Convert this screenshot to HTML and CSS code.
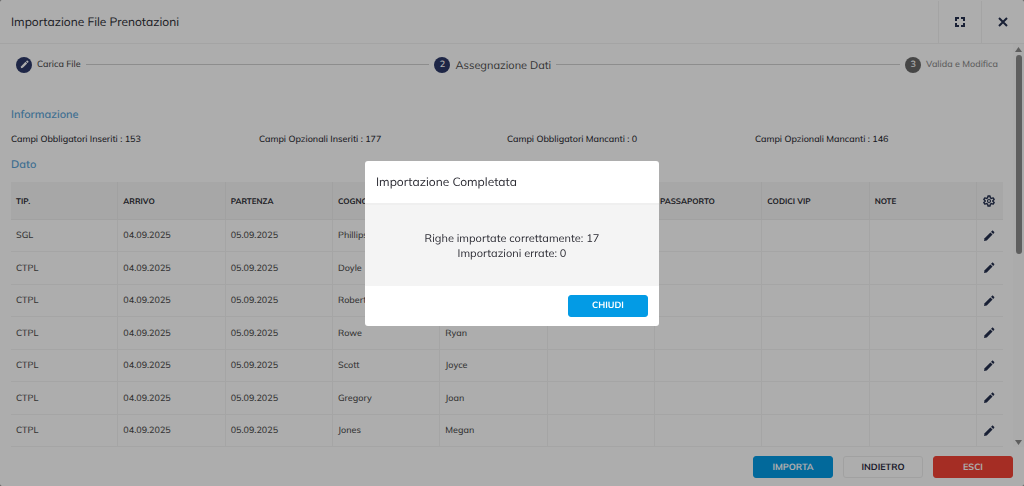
FILE: index.html
```html
<!DOCTYPE html>
<html lang="it">
<head>
    <meta charset="UTF-8">
    <meta name="viewport" content="width=device-width, initial-scale=1.0">
    <title>Importazione File Prenotazioni</title>
    <link rel="stylesheet" href="styles.css">
</head>
<body>
    <!-- Icone condivise -->
    <svg class="sprite" aria-hidden="true">
        <symbol id="icon-pencil" viewBox="0 0 24 24">
            <path d="M2 22l1.200-5.500L14.800 4.900l4.300 4.300L7.500 20.800z"/>
            <path d="M16 3.700l1.900-1.900c.8-.8 1.800-.8 2.600 0l1.700 1.700c.8.8.8 1.800 0 2.600L20.300 8z"/>
        </symbol>
        <symbol id="icon-gear" viewBox="0 0 24 24">
            <path fill="none" stroke="currentColor" stroke-width="2.800" stroke-linejoin="round" d="M10 2h4l.7 3.600 2.200 1.300 3.500-1.200 2 3.400-2.800 2.400v1l2.800 2.400-2 3.400-3.500-1.200-2.200 1.300L14 22h-4l-.7-3.600-2.200-1.300-3.500 1.200-2-3.400 2.800-2.400v-1L1.600 9.100l2-3.400 3.500 1.200 2.200-1.300z"/>
            <circle cx="12" cy="12" r="3" fill="none" stroke="currentColor" stroke-width="2.400"/>
        </symbol>
    </svg>

    <div class="window">
        <header class="window-header">
            <h1>Importazione File Prenotazioni</h1>
            <button class="icon-button" type="button" aria-label="Schermo intero">
                <svg width="10" height="10" viewBox="0 0 10 10"><path fill="none" stroke="currentColor" stroke-width="2" d="M1 4V1h3M6 1h3v3M9 6v3H6M4 9H1V6"/></svg>
            </button>
            <button class="icon-button" type="button" aria-label="Chiudi finestra">
                <svg width="10" height="10" viewBox="0 0 10 10"><path fill="none" stroke="currentColor" stroke-width="2" d="M1 1l8 8M9 1L1 9"/></svg>
            </button>
        </header>

        <div class="window-body">
            <main class="content">
                <ol class="stepper">
                    <li class="step">
                        <span class="step-icon"><svg width="9" height="9"><use href="#icon-pencil"/></svg></span>
                        <span>Carica File</span>
                    </li>
                    <li class="step-line" aria-hidden="true"></li>
                    <li class="step active">
                        <span class="step-icon">2</span>
                        <span>Assegnazione Dati</span>
                    </li>
                    <li class="step-line" aria-hidden="true"></li>
                    <li class="step disabled">
                        <span class="step-icon">3</span>
                        <span>Valida e Modifica</span>
                    </li>
                </ol>

                <h2>Informazione</h2>
                <div class="info">
                    <span>Campi Obbligatori Inseriti : 153</span>
                    <span>Campi Opzionali Inseriti : 177</span>
                    <span>Campi Obbligatori Mancanti : 0</span>
                    <span>Campi Opzionali Mancanti : 146</span>
                </div>

                <h2>Dato</h2>
                <table>
                    <thead>
                        <tr>
                            <th>TIP.</th>
                            <th>ARRIVO</th>
                            <th>PARTENZA</th>
                            <th>COGNOME</th>
                            <th>NOME</th>
                            <th></th>
                            <th>PASSAPORTO</th>
                            <th>CODICI VIP</th>
                            <th>NOTE</th>
                            <th class="actions"><button type="button" aria-label="Impostazioni"><svg width="12" height="12"><use href="#icon-gear"/></svg></button></th>
                        </tr>
                    </thead>
                    <tbody>
                        <tr><td>SGL</td><td>04.09.2025</td><td>05.09.2025</td><td>Phillips</td><td></td><td></td><td></td><td></td><td></td><td class="actions"><button type="button" aria-label="Modifica"><svg width="12" height="12"><use href="#icon-pencil"/></svg></button></td></tr>
                        <tr><td>CTPL</td><td>04.09.2025</td><td>05.09.2025</td><td>Doyle</td><td></td><td></td><td></td><td></td><td></td><td class="actions"><button type="button" aria-label="Modifica"><svg width="12" height="12"><use href="#icon-pencil"/></svg></button></td></tr>
                        <tr><td>CTPL</td><td>04.09.2025</td><td>05.09.2025</td><td>Roberts</td><td></td><td></td><td></td><td></td><td></td><td class="actions"><button type="button" aria-label="Modifica"><svg width="12" height="12"><use href="#icon-pencil"/></svg></button></td></tr>
                        <tr><td>CTPL</td><td>04.09.2025</td><td>05.09.2025</td><td>Rowe</td><td>Ryan</td><td></td><td></td><td></td><td></td><td class="actions"><button type="button" aria-label="Modifica"><svg width="12" height="12"><use href="#icon-pencil"/></svg></button></td></tr>
                        <tr><td>CTPL</td><td>04.09.2025</td><td>05.09.2025</td><td>Scott</td><td>Joyce</td><td></td><td></td><td></td><td></td><td class="actions"><button type="button" aria-label="Modifica"><svg width="12" height="12"><use href="#icon-pencil"/></svg></button></td></tr>
                        <tr><td>CTPL</td><td>04.09.2025</td><td>05.09.2025</td><td>Gregory</td><td>Joan</td><td></td><td></td><td></td><td></td><td class="actions"><button type="button" aria-label="Modifica"><svg width="12" height="12"><use href="#icon-pencil"/></svg></button></td></tr>
                        <tr><td>CTPL</td><td>04.09.2025</td><td>05.09.2025</td><td>Jones</td><td>Megan</td><td></td><td></td><td></td><td></td><td class="actions"><button type="button" aria-label="Modifica"><svg width="12" height="12"><use href="#icon-pencil"/></svg></button></td></tr>
                    </tbody>
                </table>
            </main>
            <div class="scrollbar" aria-hidden="true">
                <svg width="7" height="5" viewBox="0 0 7 5"><path d="M3.500 0L7 5H0z"/></svg>
                <div class="track"><div class="thumb"></div></div>
                <svg width="7" height="5" viewBox="0 0 7 5"><path d="M3.500 5L7 0H0z"/></svg>
            </div>
        </div>

        <footer class="window-footer">
            <button class="button primary" type="button">IMPORTA</button>
            <button class="button" type="button">INDIETRO</button>
            <button class="button danger" type="button">ESCI</button>
        </footer>
    </div>

    <div class="overlay">
        <div class="dialog" role="dialog" aria-modal="true" aria-labelledby="dialog-title">
            <h2 id="dialog-title">Importazione Completata</h2>
            <div class="dialog-body">
                <p>Righe importate correttamente: 17</p>
                <p>Importazioni errate: 0</p>
            </div>
            <div class="dialog-footer">
                <button class="button primary" type="button">CHIUDI</button>
            </div>
        </div>
    </div>
</body>
</html>
```
FILE: styles.css
```css
* {
    box-sizing: border-box;
}
body {
    margin: 0;
    background: #777;
    color: #2b2b33;
    font-family: Mulish, "Open Sans", sans-serif;
    font-size: 9px;
    font-weight: 500;
    text-rendering: geometricPrecision;
}
h1, h2, p, ol {
    margin: 0;
    padding: 0;
}
button {
    font-family: inherit;
    text-rendering: inherit;
    cursor: pointer;
}
svg {
    display: block;
    fill: currentColor;
}
.sprite {
    position: absolute;
    width: 0;
    height: 0;
}

/* Finestra */
.window {
    display: flex;
    flex-direction: column;
    height: 100vh;
    background: #fff;
    border-top: 1px solid #fff;
    border-radius: 2px;
    overflow: hidden;
}
.window-header {
    display: flex;
    flex: none;
    height: 43px;
    border-bottom: 1px solid #f2f2f2;
}
.window-header h1 {
    flex: 1;
    padding-left: 11px;
    font-size: 12px;
    font-weight: 400;
    line-height: 42px;
}
.icon-button {
    display: flex;
    align-items: center;
    justify-content: center;
    width: 43px;
    padding: 0;
    border: 0;
    border-left: 1px solid #f2f2f2;
    background: none;
    color: #25304f;
}
.window-body {
    display: flex;
    flex: 1;
    min-height: 0;
}
.content {
    flex: 1;
    padding: 0 10px 0 11px;
    overflow: hidden;
}

/* Passaggi */
.stepper {
    display: flex;
    align-items: center;
    gap: 5px;
    height: 41px;
    padding: 0 5px;
    list-style: none;
}
.step {
    display: flex;
    align-items: center;
    gap: 5px;
    color: #4c4c4c;
}
.step.active {
    font-size: 11px;
    font-weight: 400;
}
.step.disabled {
    color: #8a8a8a;
}
.step-icon {
    display: flex;
    align-items: center;
    justify-content: center;
    width: 16px;
    height: 16px;
    border-radius: 50%;
    background: #2d3968;
    color: #fff;
    font-size: 9px;
    font-weight: 600;
}
.step.disabled .step-icon {
    background: #686868;
}
.step-line {
    flex: 1;
    height: 1px;
    background: #d0d0d0;
}

/* Contenuto */
.content h2 {
    color: #5ba3d6;
    font-size: 11px;
    font-weight: 600;
    line-height: 16px;
}
.stepper + h2 {
    margin-top: 21px;
}
.info {
    display: grid;
    grid-template-columns: repeat(4, 1fr);
    margin: 10px 0 8px;
    line-height: 16px;
}
table {
    width: 100%;
    margin-top: 10px;
    border-collapse: separate;
    border-spacing: 0;
    table-layout: fixed;
}
th, td {
    height: 32px;
    padding: 0 5px;
    border-right: 1px solid #f3f3f3;
    border-bottom: 1px solid #f3f3f3;
    text-align: left;
}
td {
    color: #4c4c4c;
}
tbody tr:nth-child(even) td {
    height: 33px;
}
th {
    height: 38px;
    border-color: #ededed;
    background: #f7f7f7;
    font-size: 8px;
    font-weight: 700;
}
.actions {
    width: 26px;
    padding: 0 6px;
    border-right: 0;
}
.actions button {
    display: block;
    padding: 0;
    border: 0;
    background: none;
    color: #25304f;
}

.scrollbar {
    display: flex;
    flex-direction: column;
    align-items: center;
    width: 11px;
    padding: 3px 0 2px;
    background: #fcfcfc;
    color: #8b8b8b;
}
.track {
    flex: 1;
    margin: 3px 0;
}
.thumb {
    width: 6px;
    height: 52%;
    border-radius: 3px;
    background: #8b8b8b;
}

/* Pulsanti */
.window-footer {
    display: flex;
    flex: none;
    justify-content: flex-end;
    gap: 10px;
    padding: 9px 11px 8px;
}
.button {
    width: 80px;
    height: 22px;
    padding: 0;
    border: 1px solid #eee;
    border-radius: 3px;
    background: #fff;
    color: #2b2b40;
    font-size: 9px;
    font-weight: 700;
}
.primary {
    border-color: #039be5;
    background: #039be5;
    color: #fff;
}
.danger {
    border-color: #f44336;
    background: #f44336;
    color: #fff;
}

/* Messaggio */
.overlay {
    position: fixed;
    inset: 0;
    display: flex;
    align-items: center;
    justify-content: center;
    background: rgba(0, 0, 0, 0.32);
}
.dialog {
    width: 294px;
    border-radius: 3px;
    background: #fff;
    overflow: hidden;
}
.dialog h2 {
    padding-left: 11px;
    font-size: 12px;
    font-weight: 400;
    line-height: 42px;
}
.dialog-body {
    padding: 26px 11px 25px;
    border-top: 2px solid #efefef;
    background: #f4f4f4;
    font-size: 11px;
    font-weight: 400;
    line-height: 15px;
    text-align: center;
}
.dialog-footer {
    display: flex;
    justify-content: flex-end;
    padding: 9px 11px;
}
```
